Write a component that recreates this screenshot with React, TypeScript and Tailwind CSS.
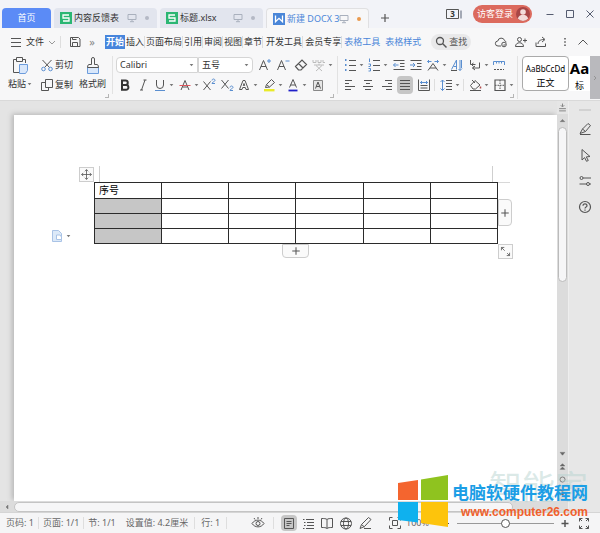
import type { ReactNode } from 'react';
import { clsx } from 'clsx';

const DARK = '#555555';
const BLUE = '#5b8fd0';

interface IconProps {
    children: ReactNode;
    size?: number;
    color?: string;
}

// 16x16 line icon, one unit per pixel at the default size
const Icon = ({ children, size = 16, color = DARK }: IconProps) => (
    <svg width={size} height={size} viewBox="0 0 16 16" fill="none" stroke={color} className="shrink-0" aria-hidden="true">
        {children}
    </svg>
);

const Caret = () => (
    <svg width="7" height="4" viewBox="0 0 7 4" className="shrink-0" aria-hidden="true">
        <path d="M1.7 1h3.6L3.5 3.2z" fill="#777" />
    </svg>
);

interface ToolProps {
    label: string;
    children: ReactNode;
    caret?: boolean;
    active?: boolean;
}

const Tool = ({ label, children, caret, active }: ToolProps) => (
    <button
        aria-label={label}
        className={clsx('flex h-[18px] shrink-0 items-center rounded-sm hover:bg-black/5', active && 'bg-[#c6c6c6]')}
    >
        {children}
        {caret && <Caret />}
    </button>
);

const Divider = () => <span className="h-3 w-px shrink-0 bg-[#dedede]" />;

const Monitor = () => (
    <svg width="10" height="10" viewBox="0 0 10 10" fill="none" stroke="#a9b0bd" className="shrink-0" aria-hidden="true">
        <path d="M1 1.5h8v5H1zM5 6.5v2M3 8.7h4" />
    </svg>
);

interface FileTabProps {
    name: string;
    active?: boolean;
}

const FileTab = ({ name, active }: FileTabProps) => (
    <div
        className={clsx(
            'flex h-5 w-[103px] items-center rounded-t-sm pl-1.5 pr-2',
            active ? 'border border-b-0 border-[#e0e0e2] bg-[#f7f7f8]' : 'bg-[#e2e5ee]'
        )}
    >
        <span
            className={clsx(
                'flex size-3 shrink-0 items-center justify-center',
                active ? 'bg-[#4a86d8]' : 'bg-[#2bb673]'
            )}
        >
            <svg width="10" height="10" viewBox="0 0 10 10" fill="none" stroke="#fff" strokeWidth="1.3" aria-hidden="true">
                {active ? <path d="M1.5 1.5v6.3L5 4.3l3.500 3.500V1.500" /> : <path d="M8 2H2v3h6v3H2" />}
            </svg>
        </span>
        <button
            className={clsx(
                'ml-0.5 flex-1 whitespace-nowrap text-left',
                active ? 'text-[#4a86d8]' : 'text-[#333]'
            )}
        >
            {name}
        </button>
        <Monitor />
        <span className={clsx('ml-2 size-1 shrink-0 rounded-full', active ? 'bg-[#ea9a4e]' : 'bg-[#b4b9c5]')} />
    </div>
);

const TitleBar = () => (
    <header className="flex h-7 shrink-0 items-end bg-[#f2f3f8] pl-0.5">
        <nav className="flex items-end gap-[3px]">
            <button className="h-5 w-[49px] rounded-t-sm bg-[#5b8bf6] text-white">首页</button>
            <FileTab name="内容反馈表" />
            <FileTab name="标题.xlsx" />
            <FileTab name="新建 DOCX 3" active />
        </nav>
        <button aria-label="新建标签" className="ml-2 flex h-5 items-center">
            <Icon>
                <path d="M8 4v8M4 8h8" strokeWidth="1.2" />
            </Icon>
        </button>
        <div className="ml-auto flex h-7 items-center pr-0.5">
            <button aria-label="窗口" className="flex items-center">
                <svg width="17" height="12" viewBox="0 0 17 12" fill="none" stroke="#555" aria-hidden="true">
                    <path d="M.5 1.5h12v9H.5z" />
                    <path d="M14 2.500h2v8h-2z" fill="#a3a8b5" stroke="none" />
                    <text x="6.5" y="9.2" fontSize="8" fontWeight="700" textAnchor="middle" fill="#333" stroke="none">3</text>
                </svg>
            </button>
            <span className="ml-1.5 mr-1"><Divider /></span>
            <button className="flex h-[18px] items-center gap-[3px] rounded-full bg-[#dc6a5e] pl-1 pr-0.5 text-white">
                访客登录
                <svg width="14" height="14" viewBox="0 0 14 14" aria-hidden="true">
                    <circle cx="7" cy="7" r="7" fill="#a94646" />
                    <circle cx="7" cy="5" r="2.8" fill="#f3dcda" />
                    <path d="M1.8 11.6a5.4 5.4 0 0 1 10.4 0A7 7 0 0 1 7 14a7 7 0 0 1-5.200-2.400z" fill="#f3dcda" />
                </svg>
            </button>
            <span className="ml-1.5 mr-1"><Divider /></span>
            <div className="flex gap-1">
                <button aria-label="最小化"><Icon color="#555b70"><path d="M4.500 8.500h7" /></Icon></button>
                <button aria-label="最大化"><Icon color="#555b70"><path d="M4.500 4.500h7v7h-7z" /></Icon></button>
                <button aria-label="关闭"><Icon color="#555b70"><path d="M4.500 4.500l7 7m0-7l-7 7" /></Icon></button>
            </div>
        </div>
    </header>
);

const menus = ['插入', '页面布局', '引用', '审阅', '视图', '章节'];
const wideMenus = ['开发工具', '会员专享'];
const tableMenus = ['表格工具', '表格样式'];

const MenuBar = () => (
    <nav className="flex h-7 shrink-0 items-center whitespace-nowrap bg-[#f7f7f8] pl-2 text-[#333]">
        <button className="flex items-center">
            <Icon><path d="M3 4.500h10M3 8.500h10M3 12.500h10" /></Icon>
            <span className="ml-0.5">文件</span>
            <Icon color="#999"><path d="M5 7l3 3 3-3" /></Icon>
        </button>
        <Divider />
        <button aria-label="保存" className="ml-1.5">
            <Icon><path d="M3.500 3.500h8l1.500 1.500v7.500H3.500zM5.500 12.500V8.500h5v4M5.500 3.500v2h4" /></Icon>
        </button>
        <button aria-label="更多" className="w-[18px] text-[11px] leading-3 text-[#888]">»</button>
        <button className="ml-1 h-3.5 w-5 bg-[#4785dc] font-bold text-white">开始</button>
        <div className="ml-px flex items-center">
            {menus.map((item) => (
                <button key={item} className="mr-px border-r border-[#ddd]">{item}</button>
            ))}
        </div>
        <div className="ml-0.5 flex items-center gap-0.5">
            {wideMenus.map((item) => (
                <button key={item} className="border-r border-[#ddd]">{item}</button>
            ))}
        </div>
        <div className="ml-0.5 flex gap-[5px] text-[#4a86d8]">
            {tableMenus.map((item) => (
                <button key={item}>{item}</button>
            ))}
        </div>
        <button className="ml-2.5 flex h-4 items-center rounded-full bg-[#e9e9ea] pl-0.5 pr-1 text-[#555]">
            <Icon><circle cx="7" cy="7" r="3.500" strokeWidth="1.300" /><path d="M9.500 9.500l4 4" strokeWidth="1.500" /></Icon>
            查找
        </button>
        <div className="ml-auto flex items-center pr-[9px]">
            <button aria-label="云同步">
                <Icon><path d="M8 12H5a2.500 2.500 0 0 1-.2-5 3.500 3.500 0 0 1 6.800-.4 3 3 0 0 1 1.600 1.700" /><circle cx="11" cy="10.500" r="2.300" /><path d="M10 10.500l1 1 1.500-1.500" /></Icon>
            </button>
            <button aria-label="协作" className="ml-1">
                <Icon><circle cx="6.500" cy="5.500" r="2" /><path d="M2.500 12.500c0-5 8-5 8 0zM10 6.500h4M12 4.500v4" /></Icon>
            </button>
            <button aria-label="分享" className="ml-1">
                <Icon><path d="M3 8.500v4h9.500v-3M5 10c0-3 2.500-4.500 6-4.500M9 3l3 2.500L9 8" /></Icon>
            </button>
            <span className="ml-1"><Divider /></span>
            <button aria-label="选项" className="ml-1">
                <Icon><path d="M8 4v1.500M8 7.300v1.500M8 10.600v1.500" strokeWidth="1.500" /></Icon>
            </button>
            <button aria-label="收起功能区" className="ml-0.5">
                <Icon><path d="M3.500 10.500L8 6l4.500 4.500" /></Icon>
            </button>
        </div>
    </nav>
);

const Lines = ({ rows }: { rows: [number, number][] }) => (
    <Icon>
        {rows.map(([from, to], i) => (
            <path key={i} d={`M${from} ${3.5 + i * 3}H${to}`} />
        ))}
    </Icon>
);

const Clipboard = () => (
    <div className="flex items-stretch gap-1.5 pl-2 pr-1.5">
        <button className="flex flex-col items-center gap-0.5">
            <svg width="18" height="20" viewBox="0 0 18 20" fill="none" stroke={DARK} aria-hidden="true">
                <path d="M4.500 3.500h-3v13H7M13.500 7V3.500h-3M4.500 1.500h6v4h-6z" />
                <path d="M7.500 8.500h8v6l-2 3h-6z" fill="#d9e7fa" stroke="#6c9cdc" />
            </svg>
            <span className="flex items-center">粘贴<Caret /></span>
        </button>
        <div className="flex flex-col justify-between">
            <button className="flex h-[18px] items-center">
                <Icon><path d="M3.500 3l7 7.500M12.500 3L5.500 10.500" /><circle cx="4.500" cy="12" r="1.800" stroke={BLUE} /><circle cx="11.500" cy="12" r="1.800" stroke={BLUE} /></Icon>
                剪切
            </button>
            <button className="flex h-[18px] items-center">
                <Icon><path d="M6.500 2.500h7v8h-7zM6.500 5.500h-4v8h7v-3" /></Icon>
                复制
            </button>
        </div>
        <button className="flex flex-col items-center gap-0.5">
            <svg width="18" height="20" viewBox="0 0 18 20" fill="none" aria-hidden="true">
                <path d="M3.500 11.500h11v6h-11z" fill="#d9e7fa" stroke="#6c9cdc" />
                <path d="M7.500 8.500V3a1.500 1.500 0 0 1 3 0v5.500h2.500q1.500 0 1.500 3h-11q0-3 1.500-3z" stroke={DARK} />
            </svg>
            格式刷
        </button>
    </div>
);

interface ComboProps {
    label: string;
    value: string;
    className: string;
}

const Combo = ({ label, value, className }: ComboProps) => (
    <span className={clsx('relative flex h-4 items-center border border-[#d5d5d5] bg-white', className)}>
        <select aria-label={label} className="w-full appearance-none bg-transparent pl-[3px]">
            <option>{value}</option>
        </select>
        <span className="pointer-events-none absolute right-0.5"><Caret /></span>
    </span>
);

const FontGroup = () => (
    <div className="flex w-[218px] flex-col justify-between">
        <div className="flex items-center">
            <div className="flex">
                <Combo label="字体" value="Calibri" className="w-[82px] rounded-l-sm" />
                <Combo label="字号" value="五号" className="w-[55px] rounded-r-sm" />
            </div>
            <div className="ml-1 flex gap-0.5">
                <Tool label="增大字号"><Icon><path d="M2.500 13L6.500 3.500l4 9.500M4 9.500h5" /><path d="M10 4h4M12 2v4" stroke={BLUE} /></Icon></Tool>
                <Tool label="减小字号"><Icon><path d="M2.500 13L6.500 3.500l4 9.500M4 9.500h5" /><path d="M10.500 4h4" stroke={BLUE} /></Icon></Tool>
                <Tool label="清除格式"><Icon><path d="M2.500 9.500l6.500-6.500 4.500 4.500-5.500 5.500H5.500zM5.500 6.500l4.500 4.500" strokeWidth="1.200" /></Icon></Tool>
                <Tool label="拼音指南" caret>
                    <Icon color="#bcbcbc"><path d="M2 3v2.500h3V3M7 3v2.500h3V3M12 3v2.500h2M3 8h10M8 6.500V8M5 8.500l6 5.500M11 8.500L5 14" /></Icon>
                </Tool>
            </div>
        </div>
        <div className="flex items-center justify-between pl-px pr-2">
            <Tool label="加粗"><Icon><path d="M5 3.500h3.500a2.200 2.200 0 0 1 0 4.500H5zM5 8h4a2.400 2.400 0 0 1 0 4.800H5z" strokeWidth="2" stroke="#333" /></Icon></Tool>
            <Tool label="倾斜"><Icon><path d="M10 3L6.500 13M8.500 3h3M5 13h3" /></Icon></Tool>
            <Tool label="下划线" caret><Icon><path d="M4.500 3v5a3.500 3.500 0 0 0 7 0V3" /><path d="M3 13.500h10" stroke={BLUE} /></Icon></Tool>
            <Tool label="删除线" caret><Icon><path d="M4 13l4-9.500 4 9.500M5.500 10h5" /><path d="M2.500 8.500h11" stroke="#e0555c" /></Icon></Tool>
            <Tool label="上标"><Icon><path d="M2.500 4.500l7 8.500M9.500 4.500l-7 8.500" /><path d="M11 3.500c0-2 3-2 3 0 0 1-3 1.500-3 3h3" stroke={BLUE} /></Icon></Tool>
            <Tool label="下标"><Icon><path d="M2.500 3l7 8.500M9.500 3l-7 8.500" /><path d="M11 10.500c0-2 3-2 3 0 0 1-3 1.500-3 3h3" stroke={BLUE} /></Icon></Tool>
            <Tool label="文字效果" caret><Icon><path d="M3.500 12.500L7 3.500h2l3.500 9h-2.500l-.7-2H6.700l-.7 2zM7.300 8.500L8 6.500l.7 2z" /></Icon></Tool>
            <Tool label="突出显示" caret>
                <Icon><path d="M4.500 10.500l1-3 5-5 3 3-5 4.500zM5.500 7.500l3 2.500" /><path d="M3 13.200h10.500" stroke="#e9ea29" strokeWidth="2.400" /></Icon>
            </Tool>
            <Tool label="字体颜色" caret>
                <Icon><path d="M4.500 10.500l3.500-8 3.500 8M5.500 8h5" /><path d="M3.500 13.500h9" stroke="#1f1fc9" strokeWidth="1.800" /></Icon>
            </Tool>
            <Tool label="字符底纹">
                <Icon><path d="M3.500 3.500h9v10h-9z" fill="#e6e6e6" stroke="#888" /><path d="M5.500 11.500L8 5l2.500 6.500M6.300 9.500h3.400" /></Icon>
            </Tool>
        </div>
    </div>
);

const ParagraphGroup = () => (
    <div className="flex w-[179px] flex-col justify-between pl-1">
        <div className="flex items-center justify-between pr-2.5">
            <Tool label="项目符号" caret>
                <Icon><path d="M3 3h1.500M3 8h1.500M3 13h1.500" stroke={BLUE} strokeWidth="1.800" /><path d="M7 3.500h7M7 8.500h7M7 13.500h7" /></Icon>
            </Tool>
            <Tool label="编号" caret>
                <Icon><path d="M3.500 1.500V5M2.500 7h2v2M2.500 9.500h2M2.500 11.500h2V14h-2" stroke={BLUE} /><path d="M7 3.500h7M7 8.500h7M7 13.500h7" /></Icon>
            </Tool>
            <Tool label="减少缩进"><Icon><path d="M2.500 3.500h11M9 6.500h4.500M9 9.500h4.500M2.500 12.500h11" /><path d="M7.500 8h-5M4.500 6l-2 2 2 2" stroke={BLUE} /></Icon></Tool>
            <Tool label="增加缩进"><Icon><path d="M2.500 3.500h11M9 6.500h4.500M9 9.500h4.500M2.500 12.500h11" /><path d="M2 8h5M5 6l2 2-2 2" stroke={BLUE} /></Icon></Tool>
            <Tool label="中文版式" caret>
                <Icon><path d="M3 13.500l5-7 5 7M5 11h6" /><path d="M2.500 4.500h4M9.500 4.500h4M4 3L2.500 4.500 4 6M12 3l1.500 1.500L12 6" stroke={BLUE} /></Icon>
            </Tool>
            <Tool label="排序"><Icon><path d="M2.500 12.500l5-9.500v9.500M4.500 9.500h3" stroke={BLUE} /><path d="M2 13.500h6" /><path d="M11 3v10.500M9.500 12l1.500 1.500 2-2M12.500 3v8" stroke={BLUE} /></Icon></Tool>
            <Tool label="显示编辑标记" caret>
                <Icon><path d="M3.500 3v4.500h5M6.500 6l-2 1.500 2 2M12.500 5.500v5.500h-7M8 9l-2.500 2L8 13" /></Icon>
            </Tool>
            <Tool label="制表位"><Icon><path d="M2.500 8V4.500h11V8M5.500 4.500v2M8 4.500v2M10.500 4.500v2" stroke={BLUE} /><path d="M3 12.500h10" strokeDasharray="2 1" /></Icon></Tool>
        </div>
        <div className="flex items-center justify-between pr-0.5">
            <Tool label="左对齐"><Lines rows={[[3, 10], [3, 7], [3, 13], [3, 9]]} /></Tool>
            <Tool label="居中"><Lines rows={[[4, 12], [6, 10], [3, 13], [5, 11]]} /></Tool>
            <Tool label="右对齐"><Lines rows={[[6, 13], [9, 13], [3, 13], [7, 13]]} /></Tool>
            <Tool label="两端对齐" active><Lines rows={[[3, 13], [3, 13], [3, 13], [3, 13]]} /></Tool>
            <Tool label="分散对齐"><Icon><path d="M2.500 2.500v11h11v-11M4.500 8.500h7M4.500 11h7" /><path d="M4 5.500h8M6 4L4.500 5.500 6 7M10 4l1.500 1.500L10 7" stroke={BLUE} /></Icon></Tool>
            <Divider />
            <Tool label="行距" caret>
                <Icon><path d="M4.500 3v10.500M2.500 5l2-2 2 2M2.500 11.500l2 2 2-2" stroke={BLUE} /><path d="M8 3.500h6M8 6.500h6M8 9.500h6M8 12.500h6" /></Icon>
            </Tool>
            <Divider />
            <Tool label="底纹颜色" caret>
                <Icon><path d="M3.500 8.500L8 3.500l5 4.500-4.500 4H6zM5 3l3 3M3 13.500h11" /><path d="M13.500 9.500v2" stroke="#b14a4a" strokeWidth="1.500" /></Icon>
            </Tool>
            <Tool label="边框" caret><Icon><path d="M3 3h10v10.500H3z" strokeWidth="1.200" /><path d="M8 3v10.500M3 8.300h10" strokeDasharray="1.500 1" /></Icon></Tool>
        </div>
    </div>
);

const GroupCorner = () => (
    <span className="absolute -bottom-1 right-[3px] size-1 border-b border-r border-[#b5b5b5]" />
);

const Ribbon = () => (
    <section className="flex h-[45px] shrink-0 items-start justify-between border-b border-[#d9d9d9] bg-[#f7f7f8] text-[#333]">
        <div className="flex h-[38px] items-stretch">
            <div className="relative flex h-[38px]"><Clipboard /><GroupCorner /></div>
            <div className="relative flex h-[38px] border-l border-[#e2e2e2] px-[3px]"><FontGroup /><GroupCorner /></div>
            <div className="relative flex h-[38px] border-l border-[#e2e2e2]"><ParagraphGroup /><GroupCorner /></div>
        </div>
        <div className="flex min-w-0 flex-1 border-l border-[#e2e2e2] pl-1">
            <button className="flex h-[35px] w-[47px] shrink-0 flex-col items-center justify-between rounded-sm border border-[#aaa] bg-white pb-0.5 pt-1.5 leading-[11px] text-black">
                <span className="text-[8px]">AaBbCcDd</span>
                <span>正文</span>
            </button>
            <button className="flex h-[35px] min-w-0 flex-1 flex-col items-center justify-between bg-white pb-0.5 text-black">
                <span className="text-[15px] font-bold leading-6">Aa</span>
                <span className="leading-[11px]">标</span>
            </button>
            <button aria-label="更多样式" className="flex h-[43px] w-2.5 shrink-0 items-center justify-center bg-[#b9b9bd]">
                <Icon size={8} color="#888"><path d="M6 4l4 4-4 4" strokeWidth="1.500" /></Icon>
            </button>
        </div>
    </section>
);

const columns = [0, 1, 2, 3, 4, 5];
const rows = ['序号', '', '', ''];

const PlusMark = () => (
    <Icon size={12} color="#555"><path d="M8 3v10M3 8h10" strokeWidth="1.400" /></Icon>
);

const handleStyle = 'absolute flex items-center justify-center border border-[#cdcdcd] bg-[#fafafa]';

const DocumentPage = () => (
    <main className="min-w-0 flex-1 bg-white pl-20 pr-[59px] pt-[67px] shadow-[-2px_-1px_5px_#b5b5b5]">
        <div className="relative">
            <table className="w-full table-fixed border-collapse bg-white text-[10px] leading-[15px] text-black">
                <tbody>
                    {rows.map((text, row) => (
                        <tr key={row}>
                            {columns.map((col) => (
                                <td
                                    key={col}
                                    className={clsx(
                                        'h-[15px] border border-[#2b2b2b] p-0 pl-1',
                                        row > 0 && col === 0 && 'bg-[#c6c6c6]'
                                    )}
                                >
                                    {col === 0 ? text : ''}
                                </td>
                            ))}
                        </tr>
                    ))}
                </tbody>
            </table>
            {/* Margin marks and handles around the table */}
            <span className="absolute -top-4 left-[5px] h-4 w-px bg-[#cfcfcf]" />
            <span className="absolute -top-4 right-[5px] h-4 w-px bg-[#cfcfcf]" />
            <span className="absolute -right-3 top-0 h-px w-3 bg-[#d8d8d8]" />
            <button aria-label="移动表格" className={clsx(handleStyle, '-left-[15px] -top-[15px] size-[15px]')}>
                <Icon size={13} color="#555">
                    <path d="M8 2v12M2 8h12M6 4l2-2 2 2M6 12l2 2 2-2M4 6L2 8l2 2M12 6l2 2-2 2" />
                </Icon>
            </button>
            <button aria-label="添加列" className={clsx(handleStyle, '-right-[14px] top-[17px] h-[27px] w-[14px] rounded-r-sm')}>
                <PlusMark />
            </button>
            <button aria-label="添加行" className={clsx(handleStyle, 'left-[188px] top-full h-[14px] w-[27px] rounded-b-sm')}>
                <PlusMark />
            </button>
            <button aria-label="缩放表格" className={clsx(handleStyle, '-right-[15px] top-full size-[15px]')}>
                <Icon size={13} color="#555">
                    <path d="M3 6.500V3h3.500M3 3l4 4M13 9.500V13H9.500M13 13l-3-3" />
                </Icon>
            </button>
            <button aria-label="粘贴选项" className="absolute -left-[45px] top-[46px] flex items-center">
                <Icon color="#a9c3e6"><path d="M3.500 2.500h6l3 3v8h-9z" fill="#dce9f8" /><path d="M7.500 7v4.500h5V9l-1.500-2z" fill="#fff" /></Icon>
                <Caret />
            </button>
        </div>
    </main>
);

const VerticalScroll = () => (
    <div className="flex w-[11px] shrink-0 flex-col items-center bg-[#dcdcdc]">
        <span className="flex h-[13px] w-full items-center justify-center bg-[#e6e6e6]">
            <Icon size={9} color="#777"><path d="M8 1v5M5 4l3 3 3-3M2 10h12M2 14h12" strokeWidth="1.500" /></Icon>
        </span>
        <span className="flex h-[13px] items-center">
            <Icon size={9} color="#777"><path d="M4 10h8L8 6z" fill="#777" /></Icon>
        </span>
        <span className="h-[155px] w-[9px] rounded-full border border-[#bbb] bg-[#f6f6f7]" />
        <div className="mt-auto flex flex-col items-center gap-1 pb-1">
            <Icon size={9} color="#666"><path d="M4 6h8l-4 5z" fill="#666" /></Icon>
            <Icon size={9} color="#666"><path d="M4 7l4-4 4 4zM4 13l4-4 4 4z" fill="#666" /></Icon>
            <Icon size={9} color="#666"><circle cx="8" cy="8" r="4.500" strokeWidth="1.500" /></Icon>
            <Icon size={9} color="#666"><path d="M4 3l4 4 4-4zM4 9l4 4 4-4z" fill="#666" /></Icon>
        </div>
    </div>
);

const SidePanel = () => (
    <aside className="flex w-8 shrink-0 flex-col items-center gap-2.5 border-l border-[#eee] bg-[#e7e7e7] pt-2">
        <span className="h-0.5 w-3 bg-[#d2d2d2]" />
        <button aria-label="编辑"><Icon><path d="M3 12.500l2.500-4.500 5.500-5.500 2.500 2-5 6zM5.500 8l3 2.500M3 13.500h10.500" /></Icon></button>
        <button aria-label="选择"><Icon><path d="M5 2.500l8 7-3.700.4 2 3.600-1.800.8-1.900-3.700L5 13z" /></Icon></button>
        <button aria-label="设置"><Icon><circle cx="4.500" cy="5" r="1.500" /><path d="M6 5h8M2.500 11h7" /><circle cx="11" cy="11" r="1.500" /><path d="M12.500 11H14" /></Icon></button>
        <button aria-label="帮助"><Icon><circle cx="8" cy="8" r="5.500" strokeWidth="1.200" /><path d="M6 6.800c0-2.600 4-2.600 4 0 0 1.400-2 1.200-2 2.700M8 10.500v1.200" strokeWidth="1.200" /></Icon></button>
    </aside>
);

const Workspace = () => (
    <div className="flex min-h-0 flex-1 bg-[#e4e4e4]">
        <div className="flex min-w-0 flex-1 flex-col">
            <div className="flex min-h-0 flex-1">
                <div className="flex min-w-0 flex-1 overflow-hidden pl-3.5 pt-3.5">
                    <DocumentPage />
                </div>
                <VerticalScroll />
            </div>
            <div className="flex h-[11px] shrink-0 items-center bg-[#dcdcdc] pl-[3px]">
                <Icon size={8} color="#777"><path d="M10 4v8L6 8z" fill="#777" /></Icon>
                <span className="ml-[3px] mr-[55px] h-2.5 flex-1 rounded-full border border-[#c4c4c4] bg-[#f6f6f7]" />
            </div>
        </div>
        <SidePanel />
    </div>
);

const StatusBar = () => (
    <footer className="flex h-[21px] shrink-0 items-center whitespace-nowrap border-t border-[#d5d5d5] bg-[#f5f5f6] pl-1.5 pr-2 text-[#666]">
        <div className="flex items-center">
            <span className="mr-1">页码: 1</span>
            <Divider />
            <span className="mx-1">页面: 1/1</span>
            <Divider />
            <span className="mx-1">节: 1/1</span>
            <span className="mx-1.5">设置值: 4.2厘米</span>
            <Divider />
            <span className="mx-1.5">行: 1</span>
            <Divider />
        </div>
        <div className="ml-auto flex items-center gap-[3px]">
            <button aria-label="护眼模式" className="mr-1">
                <Icon><path d="M2 8.500c3-4.500 9-4.500 12 0-3 4.500-9 4.500-12 0z" /><circle cx="8" cy="8.500" r="2" /><path d="M8 2v2M4 3l1 1.500M12 3l-1 1.500" /></Icon>
            </button>
            <Divider />
            <button aria-label="页面视图" className="ml-1 rounded-sm bg-[#c6c6c6]"><Icon><path d="M3.500 3.500h9v10h-9zM5.500 6.500h5M5.500 8.500h5M5.500 10.500h3" /></Icon></button>
            <button aria-label="大纲"><Icon><path d="M3 4.500h1.500M6 4.500h8M4 7.500h1.500M7 7.500h7M4 10.500h1.500M7 10.500h7M3 13.500h1.500M6 13.500h8" /></Icon></button>
            <button aria-label="阅读版式"><Icon><path d="M8 4.500v9M8 4.500C7 3.500 5 3.500 2.500 3.500v9c2.500 0 4.500 0 5.500 1 1-1 3-1 5.500-1v-9C11 3.500 9 3.500 8 4.500z" /></Icon></button>
            <button aria-label="Web 版式"><Icon><circle cx="8" cy="8.500" r="5.500" /><ellipse cx="8" cy="8.500" rx="2.500" ry="5.500" /><path d="M3 6.500h10M3 10.500h10" /></Icon></button>
            <button aria-label="写作模式"><Icon><path d="M3 13.500l1.500-4 7-7 2.500 2-6.500 7zM4.500 9.500l3 2.500M7 13.500h7" /></Icon></button>
            <span className="mx-1"><Divider /></span>
            <button aria-label="适合页面"><Icon><path d="M2.500 5.500v-3h3M10.500 2.500h3v3M13.500 10.500v3h-3M5.500 13.500h-3v-3M5.500 5.500h5v5h-5z" /></Icon></button>
            <button className="w-7 text-left">100%</button>
            <button aria-label="缩小" className="ml-px"><Icon><path d="M5 8.500h6" /></Icon></button>
            <input
                type="range"
                aria-label="缩放比例"
                defaultValue="50"
                className="h-3 w-[97px] appearance-none bg-transparent [&::-webkit-slider-runnable-track]:h-px [&::-webkit-slider-runnable-track]:bg-[#999] [&::-webkit-slider-thumb]:-mt-1 [&::-webkit-slider-thumb]:size-[9px] [&::-webkit-slider-thumb]:appearance-none [&::-webkit-slider-thumb]:rounded-full [&::-webkit-slider-thumb]:border [&::-webkit-slider-thumb]:border-[#555] [&::-webkit-slider-thumb]:bg-white"
            />
            <button aria-label="放大"><Icon><path d="M8 5v7M4.500 8.500h7" strokeWidth="1.500" /></Icon></button>
            <button aria-label="全屏"><Icon><path d="M3.500 6.500v-3h3M9.500 3.500h3v3M12.500 10.500v3h-3M6.500 13.500h-3v-3M3.500 3.500L6 6M12.500 3.500L10 6M12.500 13.500L10 11M3.500 13.500L6 11" /></Icon></button>
        </div>
    </footer>
);

// Site mark laid over the lower right corner
const SiteMark = () => (
    <div className="pointer-events-none absolute bottom-1.5 right-3 flex whitespace-nowrap">
        <span className="absolute -top-2 right-0 text-[33px] leading-10 text-[#b7d3d0]/50">智能家</span>
        <svg width="50" height="52" viewBox="0 0 50 52" className="relative" aria-hidden="true">
            <path d="M0 8l20-3v20H0z" fill="#f4652f" />
            <path d="M23 4.500L50 0v25H23z" fill="#8fc31f" />
            <path d="M0 27h20v20.500L0 45z" fill="#0fb1ee" />
            <path d="M23 27h27v25l-27-4z" fill="#fdc40c" />
        </svg>
        <div className="relative flex flex-col items-end pl-1 pt-2 font-bold">
            <span className="text-[17px] leading-[20px] text-[#1b9ee6]">电脑软硬件教程网</span>
            <a href="#" className="pointer-events-auto font-['Liberation_Sans','Noto_Sans_CJK_SC',sans-serif] text-[12px] leading-[18px] text-[#f0602c]">
                www.computer26.com
            </a>
        </div>
    </div>
);

export default function App() {
    return (
        <div className="relative flex h-screen flex-col overflow-hidden bg-[#e4e4e4] font-['Noto_Sans','Noto_Sans_CJK_SC',sans-serif] text-[9px] leading-3" lang="zh-CN">
            <TitleBar />
            <MenuBar />
            <Ribbon />
            <Workspace />
            <StatusBar />
            <SiteMark />
        </div>
    );
}
